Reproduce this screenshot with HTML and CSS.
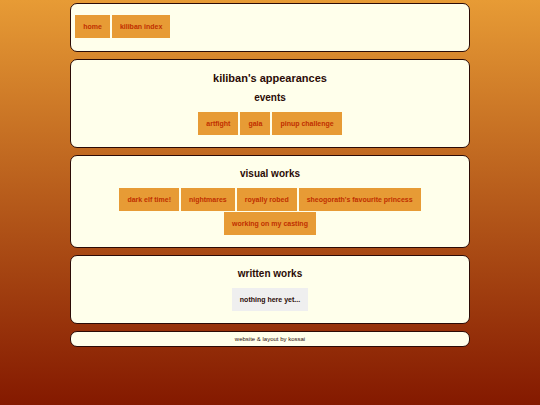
FILE: index.html
```html
<!DOCTYPE html>
<html lang="en">
<head>
  <meta charset="UTF-8" />
  <meta name="viewport" content="width=device-width, initial-scale=1.0" />
  <title>kiliban's appearances</title>
  <link rel="stylesheet" href="styles.css">
</head>
<body>
  <nav class="box nav">
    <div class="links">
      <a class="button" href="#home">home</a>
      <a class="button" href="#kiliban">kiliban index</a>
    </div>
  </nav>

  <main>
    <section class="box">
      <h1>kiliban's appearances</h1>
      <h2>events</h2>
      <div class="links">
        <a class="button" href="#artfight">artfight</a>
        <a class="button" href="#gala">gala</a>
        <a class="button" href="#pinup">pinup challenge</a>
      </div>
    </section>

    <section class="box">
      <h2>visual works</h2>
      <div class="links">
        <a class="button" href="#darkelf">dark elf time!</a>
        <a class="button" href="#nightmares">nightmares</a>
        <a class="button" href="#royally">royally robed</a>
        <a class="button" href="#princess">sheogorath's favourite princess</a>
        <a class="button" href="#casting">working on my casting</a>
      </div>
    </section>

    <section class="box">
      <h2>written works</h2>
      <div class="links">
        <button class="button empty" type="button">nothing here yet...</button>
      </div>
    </section>
  </main>

  <footer class="box footer">website &amp; layout by kossai</footer>
</body>
</html>
```

FILE: styles.css
```css
html { min-height: 100%; background: linear-gradient(#e79b35, #841900); }
body { width: 74%; margin: 3px auto; font-family: "Liberation Sans", Arial, sans-serif; font-size: 7px; color: #2b0b06; }
.box { background: #ffffeb; border: 1px solid #2b0b06; border-radius: 7px; padding: 12px 40px; margin-bottom: 7px; text-align: center; }
h1 { font-size: 11px; line-height: 12px; margin: 0 0 8px; }
h2 { font-size: 10px; line-height: 12px; margin: 0 0 8px; }
.links { display: flex; flex-wrap: wrap; justify-content: center; gap: 1px 2px; }
.nav { padding: 11px 4px 13px; }
.nav .links { justify-content: flex-start; }
.button { background: #e79b35; color: #c03000; border: none; padding: 8px 8px 7px; font-family: inherit; font-size: 7px; line-height: 8px; font-weight: bold; text-decoration: none; }
.button:hover { background: #f0b050; }
.empty { background: #efefef; color: #2b0b06; }
.empty:hover { background: #efefef; }
.footer { font-size: 6px; line-height: 8px; padding: 3px; margin-bottom: 0; }
```
